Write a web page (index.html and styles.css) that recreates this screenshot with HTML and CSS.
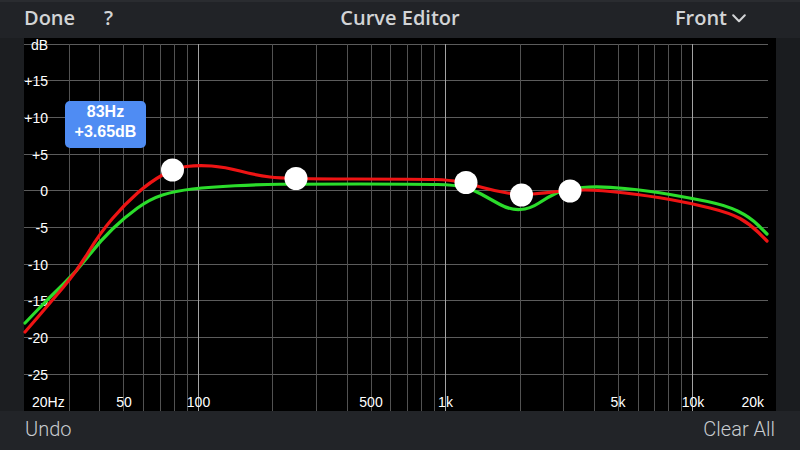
FILE: index.html
```html
<!DOCTYPE html>
<html lang="en">
<head>
<meta charset="utf-8">
<title>Curve Editor</title>
<link rel="stylesheet" href="styles.css">
</head>
<body>
<div class="app">
  <header class="topbar">
    <div class="left">
      <span class="btn">Done</span>
      <span class="btn help">?</span>
    </div>
    <h1 class="title">Curve Editor</h1>
    <div class="right">
      <span class="btn front">Front
        <svg class="chev" width="14" height="9" viewBox="0 0 14 9"><path d="M1.2 1.2 L7 7.2 L12.8 1.2" fill="none" stroke="#d2d4d6" stroke-width="2" stroke-linecap="round" stroke-linejoin="round"/></svg>
      </span>
    </div>
  </header>
  <main class="stage">
    <div class="gutter"></div>
    <div class="graph">
      <svg class="plot" width="752" height="373" viewBox="24 38 752 373">
        <g class="grid-h" stroke="#5c5c5c" stroke-width="1">
          <line x1="24" y1="44.5" x2="768" y2="44.5"/>
          <line x1="24" y1="80.5" x2="768" y2="80.5"/>
          <line x1="24" y1="117.5" x2="768" y2="117.5"/>
          <line x1="24" y1="154.5" x2="768" y2="154.5"/>
          <line x1="24" y1="190.5" x2="768" y2="190.5"/>
          <line x1="24" y1="227.5" x2="768" y2="227.5"/>
          <line x1="24" y1="264.5" x2="768" y2="264.5"/>
          <line x1="24" y1="300.5" x2="768" y2="300.5"/>
          <line x1="24" y1="337.5" x2="768" y2="337.5"/>
          <line x1="24" y1="374.5" x2="768" y2="374.5"/>
        </g>
        <g class="grid-v" stroke="#525252" stroke-width="1">
          <line x1="69.5" y1="44" x2="69.5" y2="411"/>
          <line x1="99.5" y1="44" x2="99.5" y2="411"/>
          <line x1="123.5" y1="44" x2="123.5" y2="411"/>
          <line x1="143.5" y1="44" x2="143.5" y2="411"/>
          <line x1="160.5" y1="44" x2="160.5" y2="411"/>
          <line x1="174.5" y1="44" x2="174.5" y2="411"/>
          <line x1="187.5" y1="44" x2="187.5" y2="411"/>
          <line x1="272.5" y1="44" x2="272.5" y2="411"/>
          <line x1="316.5" y1="44" x2="316.5" y2="411"/>
          <line x1="347.5" y1="44" x2="347.5" y2="411"/>
          <line x1="371.5" y1="44" x2="371.5" y2="411"/>
          <line x1="390.5" y1="44" x2="390.5" y2="411"/>
          <line x1="407.5" y1="44" x2="407.5" y2="411"/>
          <line x1="421.5" y1="44" x2="421.5" y2="411"/>
          <line x1="434.5" y1="44" x2="434.5" y2="411"/>
          <line x1="520.5" y1="44" x2="520.5" y2="411"/>
          <line x1="563.5" y1="44" x2="563.5" y2="411"/>
          <line x1="594.5" y1="44" x2="594.5" y2="411"/>
          <line x1="618.5" y1="44" x2="618.5" y2="411"/>
          <line x1="638.5" y1="44" x2="638.5" y2="411"/>
          <line x1="654.5" y1="44" x2="654.5" y2="411"/>
          <line x1="668.5" y1="44" x2="668.5" y2="411"/>
          <line x1="681.5" y1="44" x2="681.5" y2="411"/>
        </g>
        <g class="grid-major" stroke="#a3a3a3" stroke-width="1">
          <line x1="198.5" y1="44" x2="198.5" y2="411"/>
          <line x1="445.5" y1="44" x2="445.5" y2="411"/>
          <line x1="692.5" y1="44" x2="692.5" y2="411"/>
        </g>
        <g class="labels-db" text-anchor="end">
          <text x="48" y="49.5">dB</text>
          <text x="48" y="85.5">+15</text>
          <text x="48" y="122.5">+10</text>
          <text x="48" y="159.5">+5</text>
          <text x="48" y="195.5">0</text>
          <text x="48" y="232.5">-5</text>
          <text x="48" y="269.5">-10</text>
          <text x="48" y="305.5">-15</text>
          <text x="48" y="342.5">-20</text>
          <text x="48" y="379.5">-25</text>
        </g>
        <g class="labels-hz" text-anchor="middle">
          <text x="32" y="407" text-anchor="start">20Hz</text>
          <text x="124" y="407">50</text>
          <text x="198.5" y="407">100</text>
          <text x="371" y="407">500</text>
          <text x="445.5" y="407">1k</text>
          <text x="618" y="407">5k</text>
          <text x="693" y="407">10k</text>
          <text x="764" y="407" text-anchor="end">20k</text>
        </g>
        <path class="curve green" d="M25,323 L37.5,310 Q50,297 63.5,284 Q77,271 88.5,256 Q100,241 112.5,229 Q125,217 137.5,208 Q150,199 162.5,195 Q175,191 192.5,189 Q210,187 235,185.75 Q260,184.5 280,184.25 Q300,184 360,184 Q420,184 437.5,184.5 Q455,185 463.5,187 Q472,189 481,194 Q490,199 500,204.5 Q510,210 520,209.5 Q530,209 539,203 Q548,197 556.5,193 Q565,189 582.5,187.5 Q600,186 625,188.5 Q650,191 670,194.5 Q690,198 707.5,201.5 Q725,205 737.5,211 Q750,217 758.5,225.5 L767,234"/>
        <path class="curve red" d="M25,332 L37.5,317.5 Q50,303 63.5,287 Q77,271 88.5,252 Q100,233 112.5,218.5 Q125,204 137.5,193 Q150,182 162.5,175 Q175,168 186.5,166.5 Q198,165 211.5,166 Q225,167 240,171 Q255,175 270,177 Q285,179 352.5,179 Q420,179 435,179.5 Q450,180 460,182 Q470,184 482.5,187.5 Q495,191 507.5,193 Q520,195 532.5,194 Q545,193 557.5,191.5 Q570,190 585,190 Q600,190 625,193 Q650,196 670,199.5 Q690,203 710,208 Q730,213 740,218.5 Q750,224 758.5,232.5 L767,241"/>
        <g class="nodes" fill="#ffffff">
          <circle cx="172.5" cy="170" r="11.5"/>
          <circle cx="296" cy="178.5" r="11.5"/>
          <circle cx="466" cy="182.5" r="11.5"/>
          <circle cx="521.5" cy="195" r="11.5"/>
          <circle cx="570" cy="191" r="11.5"/>
        </g>
      </svg>
      <div class="tooltip">83Hz<br>+3.65dB</div>
    </div>
    <div class="gutter right"></div>
  </main>
  <footer class="bottombar">
    <span class="btn-b">Undo</span>
    <span class="btn-b">Clear All</span>
  </footer>
</div>
</body>
</html>
```
FILE: styles.css
```css
* { box-sizing: border-box; }
html, body { margin: 0; padding: 0; }
body {
  width: 800px;
  height: 450px;
  overflow: hidden;
  background: #212327;
}
.app {
  width: 800px;
  height: 450px;
  display: flex;
  flex-direction: column;
}
.topbar {
  height: 38px;
  flex: none;
  display: grid;
  grid-template-columns: 1fr auto 1fr;
  align-items: center;
  background: #212327;
  border-top: 2px solid #2a2c30;
  padding: 0 24px 5px 24px;
  font-family: "Open Sans", Lato, sans-serif;
  font-weight: 600;
  font-size: 20px;
  color: #d2d4d6;
}
.topbar .left {
  display: flex;
  align-items: center;
  gap: 29px;
}
.topbar .right {
  display: flex;
  justify-content: flex-end;
  align-items: center;
  padding-right: 30px;
}
.btn { line-height: 1; }
.title {
  margin: 0;
  font-size: 20px;
  font-weight: 600;
  line-height: 1;
}
.front {
  display: flex;
  align-items: center;
  gap: 5px;
}
.chev { display: block; margin-top: 2px; }
.stage {
  height: 373px;
  flex: none;
  display: flex;
}
.gutter {
  width: 24px;
  flex: none;
  background: #1c1e21;
}
.gutter.right { background: #1a1c1f; }
.graph {
  position: relative;
  width: 752px;
  height: 373px;
  background: #000;
}
.plot { display: block; overflow: visible; }
.plot text {
  font-family: "Liberation Sans", Arial, sans-serif;
  font-size: 14px;
  fill: #ffffff;
}
.curve {
  fill: none;
  stroke-width: 3.2;
  stroke-linecap: round;
  stroke-linejoin: round;
}
.curve.green { stroke: #2bdc2b; }
.curve.red { stroke: #ee1414; }
.tooltip {
  position: absolute;
  left: 41px;
  top: 63px;
  width: 81px;
  height: 47px;
  padding-top: 1px;
  background: #4f8cf3;
  border-radius: 5px;
  color: #ffffff;
  text-align: center;
  font-family: "Liberation Sans", Arial, sans-serif;
  font-weight: 700;
  font-size: 16px;
  line-height: 20px;
}
.bottombar {
  flex: 1;
  display: flex;
  justify-content: space-between;
  align-items: center;
  padding: 0 25px 3px 25px;
  background: #222428;
  font-family: Roboto, "Liberation Sans", sans-serif;
  font-weight: 300;
  font-size: 20px;
  color: #c9ccd0;
}
.btn-b { line-height: 1; }
```
